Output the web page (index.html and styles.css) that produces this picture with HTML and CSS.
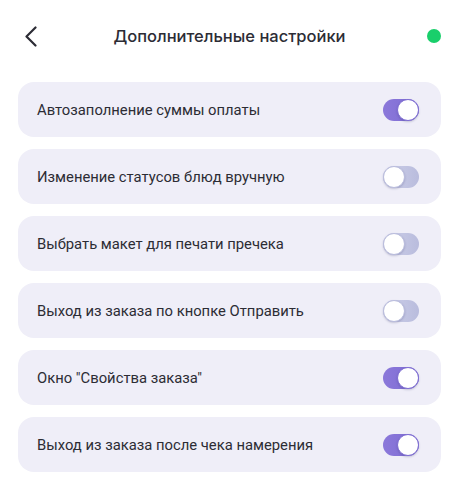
FILE: index.html
```html
<!DOCTYPE html>
<html lang="ru">
<head>
    <meta charset="UTF-8">
    <meta name="viewport" content="width=device-width, initial-scale=1.0">
    <title>Дополнительные настройки</title>
    <link rel="stylesheet" href="styles.css">
</head>
<body>

    <div class="header">
        <button class="back" aria-label="Назад">
            <svg width="14" height="21" viewBox="0 0 14 21">
                <path d="M11.5 1.5 L2.5 10.5 L11.5 19.5" fill="none" stroke="#2c2c35" stroke-width="2.2" stroke-linecap="round" stroke-linejoin="round"/>
            </svg>
        </button>
        <h1>Дополнительные настройки</h1>
        <span class="status"></span>
    </div>

    <div class="list">
        <div class="row">
            <span>Автозаполнение суммы оплаты</span>
            <span class="toggle on"></span>
        </div>
        <div class="row">
            <span>Изменение статусов блюд вручную</span>
            <span class="toggle"></span>
        </div>
        <div class="row">
            <span>Выбрать макет для печати пречека</span>
            <span class="toggle"></span>
        </div>
        <div class="row">
            <span>Выход из заказа по кнопке Отправить</span>
            <span class="toggle"></span>
        </div>
        <div class="row">
            <span>Окно "Свойства заказа"</span>
            <span class="toggle on"></span>
        </div>
        <div class="row">
            <span>Выход из заказа после чека намерения</span>
            <span class="toggle on"></span>
        </div>
    </div>

</body>
</html>
```

FILE: styles.css
```css
body {
    font-family: Roboto, "Noto Sans", sans-serif;
    margin: 0;
    padding: 0 16px 0 18px;
    background-color: #fff;
    color: #2c2c34;
}

.header {
    height: 72px;
    display: grid;
    grid-template-columns: 1fr auto 1fr;
    align-items: center;
}

.back {
    background: none;
    border: none;
    padding: 0;
    margin-left: 6px;
    width: 14px;
    height: 21px;
    cursor: pointer;
}

.back svg {
    display: block;
}

h1 {
    margin: 0;
    font-family: Inter, Roboto, sans-serif;
    font-size: 16.5px;
    font-weight: 500;
    color: #2c2c35;
}

.status {
    justify-self: end;
    width: 14px;
    height: 14px;
    border-radius: 50%;
    background-color: #19cf6b;
}

.list {
    display: flex;
    flex-direction: column;
    gap: 12px;
    margin-top: 10px;
}

.row {
    height: 55px;
    display: flex;
    align-items: center;
    justify-content: space-between;
    padding: 0 22px 0 19px;
    background-color: #efeef8;
    border-radius: 16px;
    font-size: 14.8px;
}

.toggle {
    position: relative;
    width: 36px;
    height: 22px;
    border-radius: 11px;
    background: linear-gradient(90deg, #cfd1ea, #b9bcdd);
}

.toggle::after {
    content: "";
    position: absolute;
    top: 0;
    left: 0;
    width: 20px;
    height: 20px;
    border-radius: 50%;
    background-color: #fff;
    border: 1px solid #b9bcdd;
    box-shadow: 0 1px 2px rgba(60, 60, 110, 0.25);
}

.toggle.on {
    background: linear-gradient(90deg, #8b78da, #7d6bd3);
}

.toggle.on::after {
    left: auto;
    right: 0;
    border-color: #7d6bd3;
}
```
